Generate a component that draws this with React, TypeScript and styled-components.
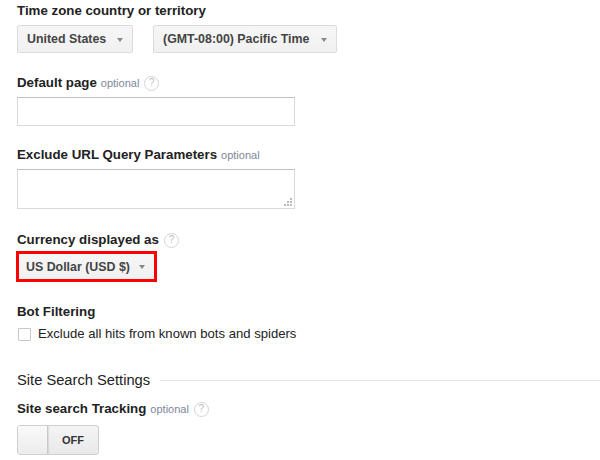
import React from "react";
import styled, { createGlobalStyle } from "styled-components";

const Global = createGlobalStyle`
  html, body { margin: 0; padding: 0; background: #fff; }
  body { font-family: "Liberation Sans", Arial, sans-serif; color: #222; }
`;

const Page = styled.div`
  width: 600px;
  height: 460px;
  overflow: hidden;
  padding: 3px 0 0 17px;
  box-sizing: border-box;
`;

const Field = styled.div<{ $mt?: number }>`
  display: flex;
  flex-direction: column;
  margin-top: ${(p) => p.$mt ?? 0}px;
`;

const Label = styled.div`
  display: flex;
  align-items: center;
  gap: 5px;
  font-size: 13.3px;
  font-weight: bold;
  line-height: 16px;
  color: #222;
  height: 16px;
`;

const Optional = styled.span`
  font-size: 11px;
  font-weight: normal;
  color: #7d8799;
  margin-left: -1px;
`;

const Help = styled.span`
  display: inline-flex;
  align-items: center;
  justify-content: center;
  width: 13px;
  height: 13px;
  border: 1px solid #d4d4d4;
  border-radius: 50%;
  font-size: 10px;
  font-weight: normal;
  color: #bbb;
  line-height: 1;
`;

const Row = styled.div`
  display: flex;
  gap: 20px;
  margin-top: 6px;
`;

const Select = styled.div<{ $w: number }>`
  box-sizing: border-box;
  width: ${(p) => p.$w}px;
  height: 28px;
  display: flex;
  align-items: center;
  justify-content: space-between;
  padding: 0 9px 0 9px;
  background: linear-gradient(#f6f6f6, #f1f1f1);
  border: 1px solid #dcdcdc;
  border-radius: 2px;
  font-size: 12.4px;
  font-weight: bold;
  color: #444;
`;

const Arrow = styled.span`
  width: 0;
  height: 0;
  border-left: 3.5px solid transparent;
  border-right: 3.5px solid transparent;
  border-top: 4px solid #888;
  margin-top: 1px;
`;

const Highlight = styled.div`
  margin-top: 3px;
  margin-left: -1px;
  width: 141px;
  height: 31px;
  box-sizing: border-box;
  border: 3px solid #f00;
  display: flex;
`;

const HighlightSelect = styled(Select)`
  height: 25px;
  border: none;
  border-radius: 0;
  padding: 0 9px 0 7px;
`;

const Input = styled.div`
  box-sizing: border-box;
  width: 278px;
  height: 29px;
  margin-top: 6px;
  border: 1px solid #d9d9d9;
  border-top-color: #c0c0c0;
  background: #fff;
`;

const TextArea = styled.div`
  position: relative;
  box-sizing: border-box;
  width: 278px;
  height: 40px;
  margin-top: 6px;
  border: 1px solid #d9d9d9;
  border-top-color: #c0c0c0;
  background: #fff;
`;

const Grip = styled.svg`
  position: absolute;
  right: 2px;
  bottom: 2px;
`;

const CheckRow = styled.label`
  display: flex;
  align-items: center;
  gap: 7px;
  margin-top: 6px;
  font-size: 13.1px;
  color: #222;
  line-height: 16px;
`;

const Box = styled.span`
  width: 11px;
  height: 11px;
  border: 1px solid #c6c6c6;
  border-radius: 1px;
  margin-left: 1px;
  background: #fff;
`;

const Section = styled.div`
  display: flex;
  align-items: center;
  gap: 10px;
  margin-top: 29px;
  font-size: 14.7px;
  color: #222;
  line-height: 18px;
`;

const Rule = styled.div`
  flex: 1;
  height: 1px;
  background: #e5e5e5;
`;

const Toggle = styled.div`
  margin-top: 8px;
  box-sizing: border-box;
  width: 82px;
  height: 30px;
  border: 1px solid #cfcfcf;
  border-radius: 3px;
  background: linear-gradient(#f4f4f4, #e9e9e9);
  display: flex;
  overflow: hidden;
`;

const Knob = styled.div`
  width: 30px;
  height: 100%;
  box-sizing: border-box;
  border-right: 1px solid #c8c8c8;
  background: linear-gradient(#fafafa, #ececec);
  box-shadow: 1px 0 1px rgba(0, 0, 0, 0.08);
`;

const ToggleText = styled.div`
  flex: 1;
  display: flex;
  align-items: center;
  justify-content: center;
  font-size: 11px;
  font-weight: bold;
  color: #333;
`;

export default function App() {
  return (
    <>
      <Global />
      <Page>
        <Field>
          <Label>Time zone country or territory</Label>
          <Row>
            <Select $w={116}>
              United States <Arrow />
            </Select>
            <Select $w={184}>
              (GMT-08:00) Pacific Time <Arrow />
            </Select>
          </Row>
        </Field>
        <Field $mt={22}>
          <Label>
            Default page <Optional>optional</Optional> <Help>?</Help>
          </Label>
          <Input />
        </Field>
        <Field $mt={21}>
          <Label>
            Exclude URL Query Parameters <Optional>optional</Optional>
          </Label>
          <TextArea>
            <Grip width="8" height="8" viewBox="0 0 8 8">
              <rect x="6" y="0" width="2" height="2" fill="#bbb" />
              <rect x="3" y="3" width="2" height="2" fill="#bbb" />
              <rect x="6" y="3" width="2" height="2" fill="#bbb" />
              <rect x="0" y="6" width="2" height="2" fill="#bbb" />
              <rect x="3" y="6" width="2" height="2" fill="#bbb" />
              <rect x="6" y="6" width="2" height="2" fill="#bbb" />
            </Grip>
          </TextArea>
        </Field>
        <Field $mt={23}>
          <Label>
            Currency displayed as <Help>?</Help>
          </Label>
          <Highlight>
            <HighlightSelect $w={135}>
              US Dollar (USD $) <Arrow />
            </HighlightSelect>
          </Highlight>
        </Field>
        <Field $mt={22}>
          <Label>Bot Filtering</Label>
          <CheckRow>
            <Box />
            Exclude all hits from known bots and spiders
          </CheckRow>
        </Field>
        <Section>
          Site Search Settings
          <Rule />
        </Section>
        <Field $mt={12}>
          <Label>
            Site search Tracking <Optional>optional</Optional> <Help>?</Help>
          </Label>
          <Toggle>
            <Knob />
            <ToggleText>OFF</ToggleText>
          </Toggle>
        </Field>
      </Page>
    </>
  );
}
